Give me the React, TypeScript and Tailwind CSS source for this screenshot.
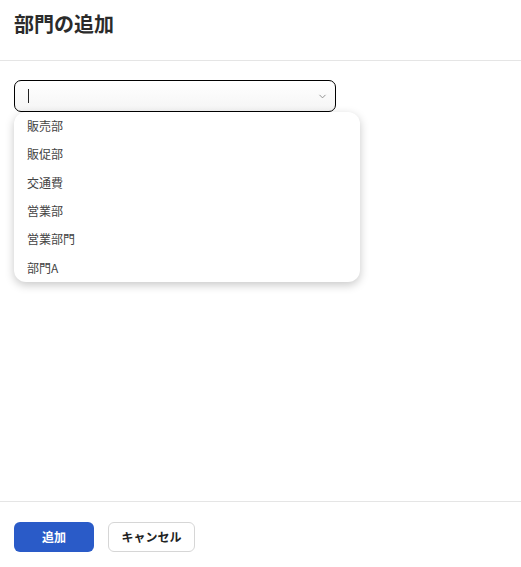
import { ChevronDown } from "lucide-react";

const options = ["販売部", "販促部", "交通費", "営業部", "営業部門", "部門A"];

export default function App() {
  return (
    <div
      className="flex h-[567px] w-[521px] flex-col bg-white text-[#333]"
      style={{ fontFamily: '"Noto Sans CJK JP", "Noto Sans", sans-serif' }}
    >
      {/* header */}
      <div className="flex h-[61px] items-center border-b border-[#e5e5e5] px-[14px] pb-[12px]">
        <h1 className="text-[20px] font-bold leading-none text-[#2b2b2b]">部門の追加</h1>
      </div>

      {/* body */}
      <div className="flex-1 px-[14px] pt-[19px]">
        <div className="relative w-[322px]">
          <div className="flex h-[32px] items-center justify-between rounded-[7px] border-[1.5px] border-black bg-gradient-to-b from-white to-[#f5f5f5] pl-[13px] pr-[7px]">
            <span className="h-[14px] w-px bg-[#222]" />
            <ChevronDown size={11} strokeWidth={2} className="text-[#888]" />
          </div>
          <ul className="absolute left-0 top-[32px] w-[346px] rounded-[12px] bg-white shadow-[0_3px_10px_rgba(0,0,0,0.22)]">
            {options.map((name) => (
              <li key={name} className="flex h-[28.3px] items-center px-[13px] text-[12px] text-[#444]">
                {name}
              </li>
            ))}
          </ul>
        </div>
      </div>

      {/* footer */}
      <div className="flex h-[66px] items-start gap-[14px] border-t border-[#e5e5e5] px-[14px] pt-[20px]">
        <button className="h-[30px] w-[80px] rounded-[6px] bg-[#2a5bc8] text-[12px] font-bold text-white">
          追加
        </button>
        <button className="h-[30px] w-[87px] rounded-[6px] border border-[#d6d6d6] bg-white text-[12px] font-bold text-[#222]">
          キャンセル
        </button>
      </div>
    </div>
  );
}
